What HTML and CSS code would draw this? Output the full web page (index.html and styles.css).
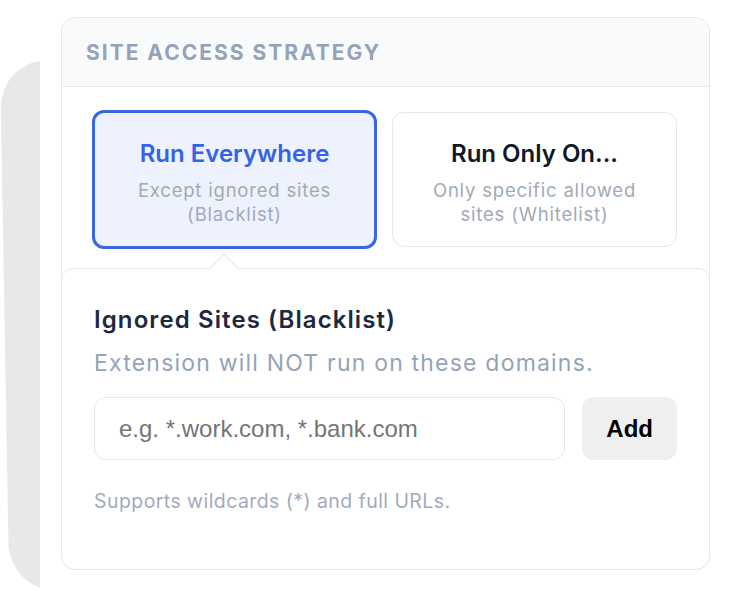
FILE: index.html
```
<!DOCTYPE html>
<html lang="en">
<head>
<meta charset="utf-8">
<title>Site Access Strategy</title>
<link rel="stylesheet" href="styles.css">
</head>
<body>
<div class="backdrop"><div class="backdrop-shape"></div></div>
<section class="card">
  <header class="card-header">
    <h2 class="card-title">Site Access Strategy</h2>
  </header>
  <div class="options">
    <button class="option is-selected" type="button">
      <span class="option-title">Run Everywhere</span>
      <span class="option-sub">Except ignored sites (Blacklist)</span>
    </button>
    <button class="option" type="button">
      <span class="option-title">Run Only On...</span>
      <span class="option-sub">Only specific allowed sites (Whitelist)</span>
    </button>
  </div>
  <div class="panel">
    <h3 class="panel-title">Ignored Sites (Blacklist)</h3>
    <p class="panel-desc">Extension will NOT run on these domains.</p>
    <div class="add-row">
      <input class="add-input" type="text" placeholder="e.g. *.work.com, *.bank.com">
      <button class="add-btn" type="button">Add</button>
    </div>
    <p class="panel-hint">Supports wildcards (*) and full URLs.</p>
  </div>
</section>
</body>
</html>
```

FILE: styles.css
```
* { box-sizing: border-box; }

html, body {
  margin: 0;
  background: #ffffff;
}

body {
  position: relative;
  height: 591px;
  overflow: hidden;
  padding: 17px 19px 0 61px;
  font-family: Inter, "Noto Sans", sans-serif;
}

.backdrop {
  position: absolute;
  left: 0;
  top: 60px;
  width: 40px;
  height: 531px;
  overflow: hidden;
}

.backdrop-shape {
  position: absolute;
  left: 0;
  top: 0;
  width: 140px;
  height: 531px;
  background: #e8e8e8;
  border-radius: 48px 0 0 48px;
  transform: skewX(1deg);
  transform-origin: top left;
}

.card {
  position: relative;
  width: 649px;
  border: 1px solid #e2e8f0;
  border-radius: 14px;
  background: #ffffff;
}

.card-header {
  background: #f8fafc;
  border-bottom: 1px solid #e2e8f0;
  border-radius: 13px 13px 0 0;
  padding: 22px 24px 21px;
}

.card-title {
  margin: 0;
  font-size: 21px;
  line-height: 25px;
  font-weight: 700;
  letter-spacing: 0.095em;
  text-transform: uppercase;
  color: #94a3b8;
}

.options {
  display: grid;
  grid-template-columns: 1fr 1fr;
  gap: 15px;
  align-items: center;
  padding: 23px 32px 0 30px;
}

.option {
  display: flex;
  flex-direction: column;
  align-items: center;
  text-align: center;
  padding: 26px 20px 20px;
  border: 1px solid #e2e8f0;
  border-radius: 12px;
  background: #ffffff;
  font-family: inherit;
  cursor: pointer;
}

.option.is-selected {
  border: 3px solid #3b66e3;
  background: #eef2fe;
}

.option-title {
  font-size: 24px;
  line-height: 30px;
  font-weight: 600;
  color: #111827;
}

.is-selected .option-title {
  color: #3563e6;
}

.option-sub {
  margin-top: 9px;
  font-size: 18.5px;
  line-height: 24px;
  letter-spacing: 0.8px;
  color: #a0aab9;
}

.panel {
  position: relative;
  margin: 19px -1px -1px;
  border: 1px solid #e2e8f0;
  border-radius: 12px 12px 14px 14px;
  background: #ffffff;
  padding: 36px 32px 54px;
}

.panel::before {
  content: "";
  position: absolute;
  top: -11px;
  left: calc(25% - 10.5px);
  width: 21px;
  height: 21px;
  background: #ffffff;
  border-top: 1px solid #e2e8f0;
  border-left: 1px solid #e2e8f0;
  transform: rotate(45deg);
}

.panel-title {
  margin: 0;
  font-size: 24px;
  line-height: 30px;
  font-weight: 600;
  letter-spacing: 1.1px;
  color: #1e293b;
}

.panel-desc {
  margin: 13px 0 0;
  font-size: 23px;
  line-height: 31px;
  letter-spacing: 1.2px;
  color: #94a3b8;
}

.add-row {
  display: flex;
  gap: 17px;
  margin-top: 18px;
}

.add-input {
  flex: 1;
  min-width: 0;
  height: 63px;
  padding: 0 24px;
  border: 1px solid #e2e8f0;
  border-radius: 12px;
  font-family: "Liberation Sans", Arial, sans-serif;
  font-size: 24px;
  color: #111827;
  background: #ffffff;
  outline: none;
}

.add-input::placeholder {
  color: #757575;
}

.add-btn {
  height: 63px;
  padding: 0 24px;
  border: none;
  border-radius: 12px;
  background: #efefef;
  font-family: "Liberation Sans", Arial, sans-serif;
  font-size: 24px;
  font-weight: 700;
  color: #000000;
  cursor: pointer;
}

.panel-hint {
  margin: 28px 0 0;
  font-size: 19.5px;
  line-height: 27px;
  letter-spacing: 0.43px;
  color: #a0abbd;
}
```
